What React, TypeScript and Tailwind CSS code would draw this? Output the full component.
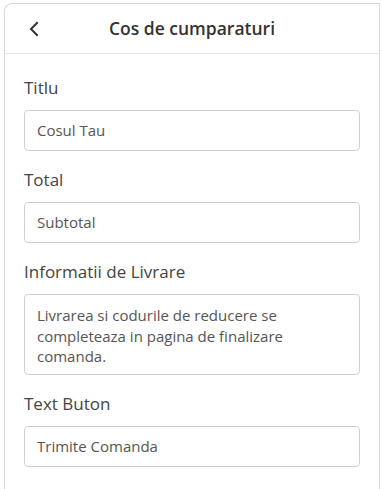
import React from "react";

const font = { fontFamily: '"Open Sans", sans-serif' };

function Field({ label, value }: { label: string; value: string }) {
  return (
    <div className="flex flex-col">
      <div className="text-[17px] leading-[24px] text-[#444444] mb-[10px]">{label}</div>
      <div className="h-[41px] border border-[#cfcfcf] rounded-[4px] px-[12px] flex items-center text-[15px] text-[#555555]">
        {value}
      </div>
    </div>
  );
}

export default function App() {
  return (
    <div className="w-[382px] h-[489px] bg-white overflow-hidden pt-[3px] pl-[4px] pr-[2px]" style={font}>
      <div className="h-[490px] border-l border-t border-r border-[#d9d9d9] rounded-tl-[8px] bg-white">
        <div className="h-[50px] border-b border-[#e3e3e3] flex items-center relative">
          <svg className="absolute left-[22px] top-[17px]" width="14" height="16" viewBox="0 0 14 16" fill="none">
            <path d="M10 2 L4 8 L10 14" stroke="#333" strokeWidth="2" strokeLinecap="square" />
          </svg>
          <div className="flex-1 text-center text-[17.5px] font-semibold text-[#333333]">Cos de cumparaturi</div>
        </div>
        <div className="px-[19px] pt-[22px] flex flex-col gap-[17px]">
          <Field label="Titlu" value="Cosul Tau" />
          <Field label="Total" value="Subtotal" />
          <div className="flex flex-col">
            <div className="text-[17px] leading-[24px] text-[#444444] mb-[10px]">Informatii de Livrare</div>
            <div className="h-[81px] border border-[#cfcfcf] rounded-[4px] px-[12px] py-[10px] text-[15px] leading-[20.5px] text-[#555555]">
              Livrarea si codurile de reducere se completeaza in pagina de finalizare comanda.
            </div>
          </div>
          <Field label="Text Buton" value="Trimite Comanda" />
        </div>
      </div>
    </div>
  );
}
